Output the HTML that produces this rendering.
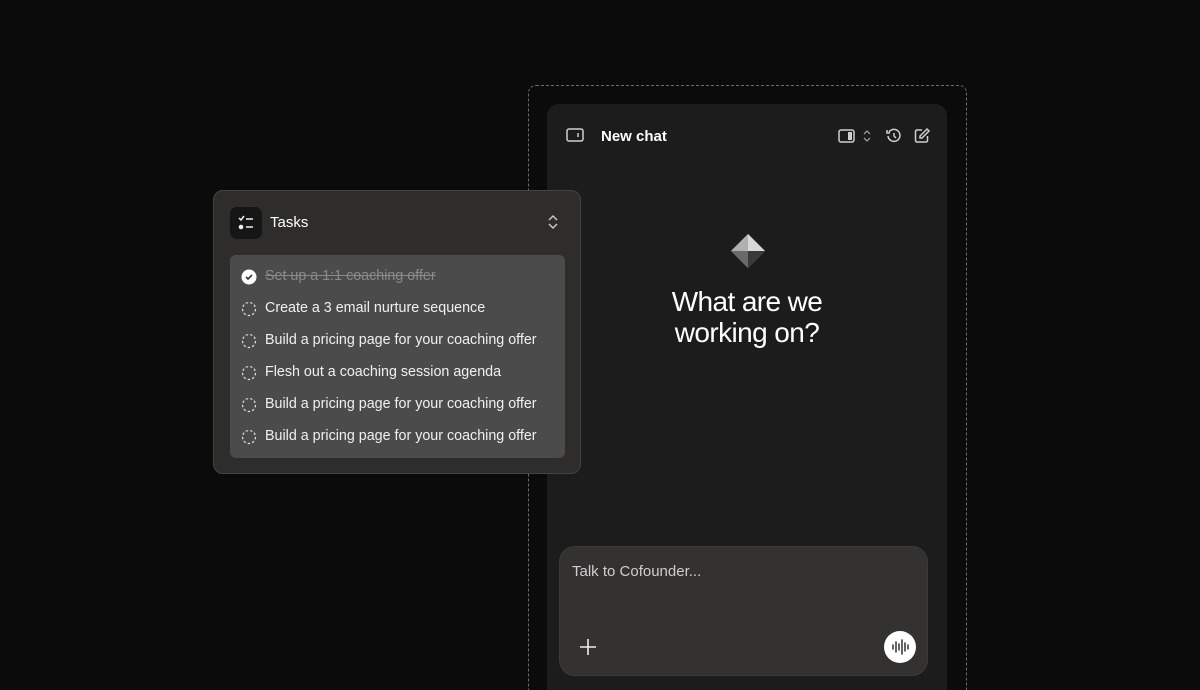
<!DOCTYPE html>
<html style="width:1200px;height:690px;overflow:hidden"><head><style>
*{margin:0;padding:0;box-sizing:border-box}
body{width:1200px;height:690px;background:#0b0b0b;position:relative;overflow:hidden;font-family:"Liberation Sans",sans-serif;color:#fff}
.dash{position:absolute;left:528px;top:85px;width:439px;height:605px;border:1px dashed #6a6a6a;border-bottom:none;border-radius:8px 8px 0 0}
.panel{position:absolute;left:547px;top:104px;width:400px;height:586px;background:#1c1c1c;border-radius:12px 12px 0 0}
.title{position:absolute;left:601px;top:128px;font-size:15px;font-weight:bold}
.h{position:absolute;left:547px;width:400px;top:286px;text-align:center;font-size:28px;line-height:31px;letter-spacing:-0.6px}
.input{position:absolute;left:559px;top:546px;width:369px;height:130px;background:#343231;border-radius:16px;border:1px solid #3c3a39}
.input .ph{position:absolute;left:12px;top:16px;font-size:15px;color:#cfcfcf}
.mic{position:absolute;left:324px;top:84px;width:32px;height:32px;border-radius:50%;background:#fff}
.card{position:absolute;left:213px;top:190px;width:368px;height:284px;background:#2e2d2c;border:1px solid #454443;border-radius:10px}
.ic{position:absolute;left:16px;top:16px;width:32px;height:32px;border-radius:7px;background:#161616}
.tt{position:absolute;left:56px;top:23px;font-size:15px}
.list{position:absolute;left:16px;top:64px;width:335px;height:203px;background:#4b4b4b;border-radius:6px}
.row{position:absolute;left:11px;height:20px;font-size:14.3px;color:#f0f0f0}
.row span{position:absolute;left:24px;top:2px;white-space:nowrap}
.row svg{position:absolute;left:0;top:3px}
</style></head><body>
<div class="dash"></div>
<div class="panel"></div>
<svg style="position:absolute;left:566px;top:128px" width="18" height="15" viewBox="0 0 18 15"><rect x="1" y="1" width="16" height="12" rx="2" fill="none" stroke="#cfcfcf" stroke-width="1.5"/><line x1="12" y1="5" x2="12" y2="9" stroke="#cfcfcf" stroke-width="1.5"/></svg>
<div class="title">New chat</div>
<svg style="position:absolute;left:838px;top:129px" width="18" height="14" viewBox="0 0 18 14"><rect x="1" y="1" width="15" height="12" rx="2" fill="none" stroke="#cfcfcf" stroke-width="1.5"/><rect x="10" y="3" width="4" height="8" fill="#cfcfcf"/></svg>
<svg style="position:absolute;left:862px;top:129px" width="10" height="14" viewBox="0 0 10 14"><path d="M2 5l3-3 3 3M2 9l3 3 3-3" fill="none" stroke="#999" stroke-width="1.3"/></svg>
<svg style="position:absolute;left:886px;top:128px" width="16" height="16" viewBox="0 0 16 16"><path d="M3 4A6 6 0 1 1 2 8" fill="none" stroke="#cfcfcf" stroke-width="1.5"/><path d="M1 2v3h3" fill="none" stroke="#cfcfcf" stroke-width="1.5"/><path d="M8 5v3l2 2" fill="none" stroke="#cfcfcf" stroke-width="1.5"/></svg>
<svg style="position:absolute;left:914px;top:127px" width="17" height="17" viewBox="0 0 17 17"><path d="M8 3H3a1.5 1.5 0 0 0-1.5 1.5v9A1.5 1.5 0 0 0 3 15h9a1.5 1.5 0 0 0 1.5-1.5V9" fill="none" stroke="#cfcfcf" stroke-width="1.5"/><path d="M13 2l2 2-7 7H6V9z" fill="none" stroke="#cfcfcf" stroke-width="1.5"/></svg>
<svg style="position:absolute;left:730px;top:233px" width="36" height="36" viewBox="0 0 36 36"><polygon points="18,1 35,18 18,35 1,18" fill="#8a8a8a"/><polygon points="18,1 35,18 18,18" fill="#d8d8d8"/><polygon points="18,1 1,18 18,18" fill="#b0b0b0"/><polygon points="1,18 18,35 18,18" fill="#6a6a6a"/><polygon points="35,18 18,35 18,18" fill="#3a3a3a"/></svg>
<div class="h">What are we<br>working on?</div>
<div class="input"><div class="ph">Talk to Cofounder...</div>
<svg style="position:absolute;left:19px;top:91px" width="18" height="18" viewBox="0 0 18 18"><path d="M9 1v16M1 9h16" stroke="#eee" stroke-width="1.6"/></svg>
<div class="mic"><svg width="32" height="32" viewBox="0 0 32 32"><path d="M9 14v4M12 11v10M15 13v6M18 9v14M21 12v8M24 14v4" stroke="#222" stroke-width="1.4" stroke-linecap="round"/></svg></div>
</div>
<div class="card">
<div class="ic"><svg width="32" height="32" viewBox="0 0 32 32"><path d="M9 11l2 2 3-4" fill="none" stroke="#eee" stroke-width="1.5"/><circle cx="11" cy="20" r="2.3" fill="#eee"/><path d="M16 12h7M16 20h7" stroke="#eee" stroke-width="1.6"/></svg></div>
<div class="tt">Tasks</div>
<svg style="position:absolute;left:333px;top:23px" width="12" height="16" viewBox="0 0 12 16"><path d="M2 6l4-4 4 4M2 10l4 4 4-4" fill="none" stroke="#ccc" stroke-width="1.4"/></svg>
<div class="list">
<div class="row" style="top:11px"><svg width="16" height="16" viewBox="0 0 16 16"><circle cx="8" cy="8" r="7.5" fill="#fff"/><path d="M5 8l2 2 4-4" fill="none" stroke="#333" stroke-width="1.6"/></svg><span style="color:#8a8a8a;text-decoration:line-through">Set up a 1:1 coaching offer</span></div>
<div class="row" style="top:43px"><svg width="16" height="16"><circle cx="8" cy="8" r="6.5" fill="none" stroke="#ddd" stroke-width="1.2" stroke-dasharray="2.5 2"/></svg><span>Create a 3 email nurture sequence</span></div>
<div class="row" style="top:75px"><svg width="16" height="16"><circle cx="8" cy="8" r="6.5" fill="none" stroke="#ddd" stroke-width="1.2" stroke-dasharray="2.5 2"/></svg><span>Build a pricing page for your coaching offer</span></div>
<div class="row" style="top:107px"><svg width="16" height="16"><circle cx="8" cy="8" r="6.5" fill="none" stroke="#ddd" stroke-width="1.2" stroke-dasharray="2.5 2"/></svg><span>Flesh out a coaching session agenda</span></div>
<div class="row" style="top:139px"><svg width="16" height="16"><circle cx="8" cy="8" r="6.5" fill="none" stroke="#ddd" stroke-width="1.2" stroke-dasharray="2.5 2"/></svg><span>Build a pricing page for your coaching offer</span></div>
<div class="row" style="top:171px"><svg width="16" height="16"><circle cx="8" cy="8" r="6.5" fill="none" stroke="#ddd" stroke-width="1.2" stroke-dasharray="2.5 2"/></svg><span>Build a pricing page for your coaching offer</span></div>
</div>
</div>
</body></html>
